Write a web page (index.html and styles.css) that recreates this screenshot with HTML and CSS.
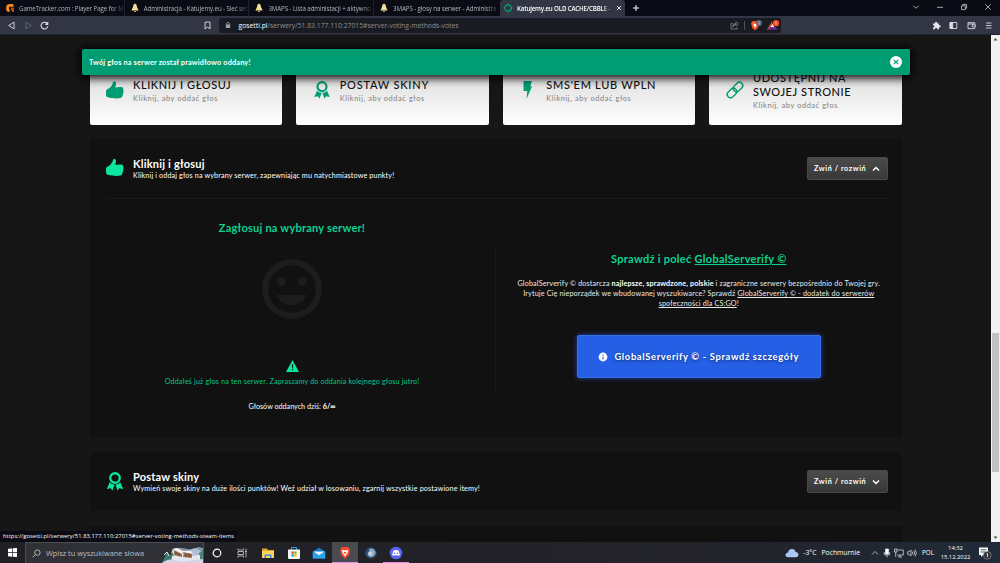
FILE: index.html
```
<!DOCTYPE html>
<html lang="pl">
<head>
    <meta charset="UTF-8">
    <meta name="viewport" content="width=device-width, initial-scale=1.0">
    <title>Katujemy.eu OLD CACHE/CBBLE</title>
    <link rel="stylesheet" href="styles.css">
</head>
<body>
    <!-- icons used more than once -->
    <svg class="sprite">
        <symbol id="thumb" viewBox="0 0 18 18">
            <path d="M0 10.2Q.3 8.2 2.2 7.8Q5 6.5 6.3 3.6L7.2 1Q7.8-.3 9 .4Q10.4 1.4 9.9 3.5L9.3 6.4Q12.5 5.8 15.5 6.1Q17.3 6.4 17.2 8Q17.9 8.9 17.3 10.2Q17.9 11.4 17 12.6Q17.3 14 16.1 14.9Q16.3 16.6 14.4 17.1Q10.4 17.9 6.4 17Q3.4 16.9 1.2 15.9Q0 15.4 0 14Z"/>
        </symbol>
        <symbol id="award" viewBox="0 0 18 20">
            <circle cx="9" cy="6.3" r="5" fill="none" stroke="currentColor" stroke-width="2.4"/>
            <path d="M3.4 10.8Q5 13 8.6 13.4L6.2 19.8L4.6 17L.4 17.8ZM14.6 10.8Q13 13 9.4 13.4L11.8 19.8L13.4 17L17.6 17.8Z"/>
        </symbol>
        <symbol id="bell" viewBox="0 0 10 10">
            <path d="M5 .5Q7 1.2 7.1 4.2L8.6 7.6H1.4L2.9 4.2Q3 1.2 5 .5ZM3.8 8.1H6.2Q5 9.8 3.8 8.1Z"/>
        </symbol>
    </svg>

    <div class="tabs">
        <div class="tab">
            <svg class="fav" viewBox="0 0 10 10"><path d="M5 1Q1 1 1 5T4 9L5.5 6.8L4 6.5V4L9 3.5L8 1Z" fill="#f58a1c"/><path d="M5.5 4.5H9V9H7Z" fill="#b94a10"/></svg>
            <span class="tab-title">GameTracker.com : Player Page for Mk</span>
        </div>
        <div class="tab">
            <svg class="fav bell"><use href="#bell"/></svg>
            <span class="tab-title">Administracja - Katujemy.eu - Sieć ser</span>
        </div>
        <div class="tab">
            <svg class="fav bell"><use href="#bell"/></svg>
            <span class="tab-title">3MAPS - Lista administacji + aktywno</span>
        </div>
        <div class="tab last">
            <svg class="fav bell"><use href="#bell"/></svg>
            <span class="tab-title">3MAPS - głosy na serwer - Administra</span>
        </div>
        <div class="tab active">
            <svg class="fav" viewBox="0 0 10 10"><circle cx="5" cy="5" r="3.2" fill="none" stroke="#0a9b71" stroke-width="1.3"/><path d="M5 .5V2M5 8V9.5M.5 5H2M8 5H9.5" stroke="#0a9b71" stroke-width="1.2"/></svg>
            <span class="tab-title">Katujemy.eu OLD CACHE/CBBLE -</span>
            <svg class="tab-close" viewBox="0 0 6 6"><path d="M1 1L5 5M5 1L1 5"/></svg>
        </div>
        <svg class="new-tab" viewBox="0 0 8 8"><path d="M4 1V7M1 4H7"/></svg>
        <div class="window-buttons">
            <svg viewBox="0 0 8 8"><path d="M1.5 2.8L4 5.3L6.5 2.8"/></svg>
            <svg viewBox="0 0 8 8"><path d="M1 4.3H7"/></svg>
            <svg viewBox="0 0 8 8"><path d="M1.5 2.8H5.3V6.6H1.5ZM2.8 2.6V1.4H6.6V5.3H5.5"/></svg>
            <svg viewBox="0 0 8 8"><path d="M1.3 1.3L6.7 6.7M6.7 1.3L1.3 6.7"/></svg>
        </div>
    </div>

    <div class="toolbar">
        <svg class="nav" viewBox="0 0 8 8"><path d="M6.3 1V7L1.5 4Z"/></svg>
        <svg class="nav off" viewBox="0 0 8 8"><path d="M1.7 1V7L6.5 4Z"/></svg>
        <svg class="nav" viewBox="0 0 8 8"><path d="M6.6 2.6A3 3 0 1 0 6.9 4.8M6.9.8V3H4.7" stroke-width="1"/></svg>
        <svg class="nav bookmark" viewBox="0 0 8 8"><path d="M1.8 1H6.2V7L4 5.3L1.8 7Z"/></svg>
        <div class="address">
            <svg class="lock" viewBox="0 0 6 8"><path d="M.8 3.4H5.2V7H.8Z" fill="#9b9da5"/><path d="M1.7 3.5V2Q3 0 4.3 2V3.5" fill="none" stroke="#9b9da5" stroke-width=".8"/></svg>
            <span class="url"><b>gosetti.pl</b>/serwery/51.83.177.110:27015#server-voting-methods-votes</span>
            <svg class="share" viewBox="0 0 9 9"><path d="M3 2.6H1V8H7V6M2.8 6Q3 3.4 6 3.4V5L8.4 2.8L6 .8V2.3Q3 2.5 2.8 6Z"/></svg>
            <i class="sep"></i>
            <svg class="brave" viewBox="0 0 12 11"><path d="M2.5 1H7.5L9 3L8 7.8L5 10.5L2 7.8L1 3Z" fill="#f4501e"/><path d="M3 3.3L5 4L7 3.3L6.2 5.8L5 8L3.8 5.8Z" fill="#fff"/><circle cx="9" cy="3" r="2.9" fill="#626977"/><path d="M9 1.6V4.4" stroke="#ddd" stroke-width=".7"/></svg>
            <svg class="bat" viewBox="0 0 13 11"><path d="M5.2 1L0 9.5H3.5L5.5 6Z" fill="#f0502a"/><path d="M0 9.5H10.5L8.5 7H3Z" fill="#71309a"/><path d="M5.5 4L7.3 7H3.8Z" fill="#fff"/><circle cx="9" cy="3.2" r="3.1" fill="#fa4b24"/><path d="M9 1.8V4.6" stroke="#fff" stroke-width=".7"/></svg>
        </div>
        <div class="extensions">
            <svg viewBox="0 0 9 9"><path d="M1 2.5H3Q2.8.8 4.1.8T5.2 2.5H7V4.3Q8.7 4.1 8.7 5.3T7 6.5V8.3H5.3Q5.3 6.8 4.1 6.8T2.9 8.3H1V6.5Q2.5 6.4 2.5 5.4T1 4.3Z" fill="#e8e8ec" stroke="none"/></svg>
            <svg viewBox="0 0 9 9"><path d="M1.2 1.5H7.8V7.5H1.2Z"/><path d="M1 1.5H3.7V7.5H1Z" fill="#dcdde2"/></svg>
            <svg viewBox="0 0 9 9"><path d="M7.8 3.2V1.7H1V7.6H7.8V6.3M1 3H7M5.2 3.7H8.4V5.8H5.2Z"/></svg>
            <svg viewBox="0 0 9 9"><path d="M2 2H7.5M2 4.5H7.5M2 7H7.5"/></svg>
        </div>
    </div>

    <div class="viewport">
        <div class="page">
            <div class="methods">
                <div class="method">
                    <svg class="icon"><use href="#thumb"/></svg>
                    <div class="method-text">
                        <h3>KLIKNIJ I GŁOSUJ</h3>
                        <p>Kliknij, aby oddać głos</p>
                    </div>
                </div>
                <div class="method">
                    <svg class="icon"><use href="#award"/></svg>
                    <div class="method-text">
                        <h3 class="skins">POSTAW SKINY</h3>
                        <p>Kliknij, aby oddać głos</p>
                    </div>
                </div>
                <div class="method">
                    <svg class="icon" viewBox="0 0 18 18"><path d="M4.5 0H12.8L11.3 5.6H13L7.5 18L8.3 10H4.5Z"/></svg>
                    <div class="method-text">
                        <h3 class="sms">SMS'EM LUB WPLN</h3>
                        <p>Kliknij, aby oddać głos</p>
                    </div>
                </div>
                <div class="method">
                    <svg class="icon link" viewBox="0 0 18 18"><rect x="-5.3" y="-3.3" width="10.6" height="6.6" rx="3.3" transform="translate(6 12) rotate(-45)"/><rect x="-5.3" y="-3.3" width="10.6" height="6.6" rx="3.3" transform="translate(12 6) rotate(-45)"/></svg>
                    <div class="method-text">
                        <h3>UDOSTĘPNIJ NA<br>SWOJEJ STRONIE</h3>
                        <p>Kliknij, aby oddać głos</p>
                    </div>
                </div>
            </div>

            <section class="panel">
                <header class="panel-head">
                    <svg class="icon thumb-icon"><use href="#thumb"/></svg>
                    <div class="panel-title">
                        <h2>Kliknij i głosuj</h2>
                        <p>Kliknij i oddaj głos na wybrany serwer, zapewniając mu natychmiastowe punkty!</p>
                    </div>
                    <button class="toggle">Zwiń / rozwiń <svg viewBox="0 0 8 6"><path d="M1 4.6L4 1.4L7 4.6"/></svg></button>
                </header>
                <div class="panel-body">
                    <div class="vote">
                        <h4 class="vote-title">Zagłosuj na wybrany serwer!</h4>
                        <svg class="smile" viewBox="0 0 60 60"><circle cx="30" cy="30" r="26.8"/><g><circle cx="19.3" cy="22.5" r="4.5"/><circle cx="40.3" cy="22.5" r="4.5"/><path d="M14.5 36H45Q39.5 46.5 29.8 46.5T14.5 36Z"/></g></svg>
                        <svg class="warning" viewBox="0 0 13 12"><path d="M6.5 0L13 12H0Z"/><path d="M6.5 4.2V7.8M6.5 8.8V10.2" stroke="#111" stroke-width="1.2"/></svg>
                        <p class="voted">Oddałeś już głos na ten serwer. Zapraszamy do oddania kolejnego głosu jutro!</p>
                        <p class="count">Głosów oddanych dziś: <b>6/∞</b></p>
                    </div>
                    <div class="promo">
                        <h4 class="promo-title">Sprawdź i poleć <u>GlobalServerify ©</u></h4>
                        <p class="promo-text">
                            <span>GlobalServerify © dostarcza <b>najlepsze, sprawdzone, polskie</b> i zagraniczne serwery bezpośrednio do Twojej gry.</span>
                            <span>Irytuje Cię nieporządek we wbudowanej wyszukiwarce? Sprawdź <u>GlobalServerify © - dodatek do serwerów</u></span>
                            <span><u>społeczności dla CS:GO</u>!</span>
                        </p>
                        <a class="promo-button">
                            <svg viewBox="0 0 10 10"><circle cx="5" cy="5" r="4.4" fill="#fff"/><path d="M5 2.3V3.5M5 4.4V7.4" stroke="#245fe5" stroke-width="1.1"/></svg>
                            <span>GlobalServerify © - Sprawdź szczegóły</span>
                        </a>
                    </div>
                </div>
            </section>

            <section class="panel">
                <header class="panel-head">
                    <svg class="icon"><use href="#award"/></svg>
                    <div class="panel-title">
                        <h2>Postaw skiny</h2>
                        <p>Wymień swoje skiny na duże ilości punktów! Weź udział w losowaniu, zgarnij wszystkie postawione itemy!</p>
                    </div>
                    <button class="toggle">Zwiń / rozwiń <svg viewBox="0 0 8 6"><path d="M1 1.4L4 4.6L7 1.4"/></svg></button>
                </header>
            </section>

            <section class="panel next"></section>
        </div>

        <div class="alert">
            <span>Twój głos na serwer został prawidłowo oddany!</span>
            <svg viewBox="0 0 12 12"><circle cx="6" cy="6" r="6" fill="#fff"/><path d="M3.8 3.8L8.2 8.2M8.2 3.8L3.8 8.2" stroke="#009c72" stroke-width="1.2"/></svg>
        </div>

        <div class="scrollbar">
            <svg viewBox="0 0 9 9"><path d="M2.5 5.5L4.5 3L6.5 5.5Z"/></svg>
            <div class="thumb"></div>
            <svg viewBox="0 0 9 9"><path d="M2.5 3.5L4.5 6L6.5 3.5Z"/></svg>
        </div>

        <div class="status">https://gosetti.pl/serwery/51.83.177.110:27015#server-voting-methods-steam-items</div>
    </div>

    <div class="taskbar">
        <div class="start">
            <svg viewBox="0 0 9 9"><path d="M0 .8L4 .4V4.2H0ZM4.7 .3L9 0V4.2H4.7ZM0 4.9H4V8.7L0 8.2ZM4.7 4.9H9V9L4.7 8.7Z" fill="#fff"/></svg>
        </div>
        <div class="search">
            <svg class="glass" viewBox="0 0 10 10"><circle cx="6" cy="4" r="3"/><path d="M3.9 6.1L.8 9.2"/></svg>
            <span>Wpisz tu wyszukiwane słowa</span>
            <svg class="scene" viewBox="0 0 41 16">
                <path d="M10 3Q14 0 20 1T30 3L36 0L41 1V16H8Z" fill="#8397a8"/>
                <path d="M24 4L33 1L41 5V10H24Z" fill="#afc0d2"/>
                <path d="M0 16L5 5L8 9L11 2L15 16Z" fill="#3c7870"/>
                <path d="M37 16V6L41 3V16Z" fill="#4e8580"/>
                <path d="M10 9L20 6L29 9L38 8V16H9Z" fill="#e6e6ee"/>
                <path d="M11 3L20 5V10L12 8ZM22 5L30 6V11L21 10Z" fill="#9b6d48"/>
                <path d="M10 2L15 1L21 4L29 4L31 7L21 5L20 7Z" fill="#f6f4f2"/>
                <path d="M14 5V8M17 6V9M24 7V10M27 7V10" stroke="#5e3d2b"/>
                <path d="M0 16Q6 11 13 13T25 14L41 12V16Z" fill="#d7d5e5"/>
                <path d="M2 8L5 5L7 9M10 6L11 3L12 8" fill="none" stroke="#dce9e8"/>
            </svg>
        </div>
        <div class="apps">
            <div><svg viewBox="0 0 14 14"><circle cx="7" cy="7" r="3.8" fill="none" stroke="#fff" stroke-width="1.2"/></svg></div>
            <div><svg viewBox="0 0 14 14"><path d="M2 2.5V4H7.5V2.5M2 11.5V10H7.5V11.5M2 5.5H7.5V8.5H2ZM10 2.5V11.5M9 5.5H11" fill="none" stroke="#bdbdc2" stroke-width=".9"/></svg></div>
            <div><svg viewBox="0 0 14 14"><path d="M1 2.5H6L7 4H13V12H1Z" fill="#e8a825"/><path d="M1 5H13V12H1Z" fill="#fbd45e"/><path d="M3.5 12V8.5H10.5V12H9V10H5V12Z" fill="#3a8fdc"/></svg></div>
            <div><svg viewBox="0 0 14 14"><path d="M4.5 4V1.5H9.5V4" fill="none" stroke="#29a9dd"/><path d="M1 3.5H13V12Q13 13 12 13H2Q1 13 1 12Z" fill="#f4f4f4"/><path d="M4.5 5.5H6.8V7.8H4.5Z" fill="#f05023"/><path d="M7.3 5.5H9.6V7.8H7.3Z" fill="#79b900"/><path d="M4.5 8.3H6.8V10.6H4.5Z" fill="#00a1ed"/><path d="M7.3 8.3H9.6V10.6H7.3Z" fill="#fdb900"/></svg></div>
            <div><svg viewBox="0 0 14 14"><path d="M.8 5.5L7 1.5L13.2 5.5V12.5H.8Z" fill="#1678c8"/><path d="M1.5 5.5H12.5L7 9.5Z" fill="#f1f6fa"/><path d="M.8 5.5L7 9.5L13.2 5.5V12.5H.8Z" fill="#2ba5ea"/></svg></div>
            <div class="current"><svg viewBox="0 0 14 14"><path d="M4 1H10L12 3.5L11 9L7 13L3 9L2 3.5Z" fill="#f4472b"/><path d="M3.8 3.8L7 4.5L10.2 3.8L9.5 7L7 10.5L4.5 7Z" fill="#fff"/><path d="M5.5 6L7 8.5L8.5 6Z" fill="#f4472b"/></svg></div>
            <div><svg viewBox="0 0 14 14"><circle cx="7" cy="7" r="5.8" fill="#274c73"/><path d="M5 3Q9 1.5 11 5T8 11Q4 11.5 3.5 8Q3.5 5.5 6 5Q4.5 4.5 5 3Z" fill="#91a9bd"/><circle cx="6.5" cy="7.5" r="2" fill="#c4d1dc"/></svg></div>
            <div class="running"><svg viewBox="0 0 14 14"><circle cx="7" cy="7" r="6.3" fill="#5865f2"/><path d="M4.5 4.5Q7 3.7 9.5 4.5L11 9Q9.5 10.3 8.7 9.5Q7 9 5.3 9.5Q4.5 10.3 3 9Z" fill="#fff"/><circle cx="5.6" cy="7.3" r=".8" fill="#5865f2"/><circle cx="8.4" cy="7.3" r=".8" fill="#5865f2"/></svg></div>
        </div>
        <div class="tray">
            <svg class="cloud" viewBox="0 0 14 10"><path d="M3.5 9.3Q.5 9.3 .5 6.8Q.7 4.8 3 4.5Q3.5 1 7 1Q10 1 10.6 4Q13.5 4.3 13.5 7Q13.2 9.3 10.5 9.3Z" fill="#a9c7f5"/></svg>
            <span class="temp">-3°C</span>
            <span class="weather">Pochmurnie</span>
            <svg class="sys up" viewBox="0 0 8 8"><path d="M1 5.5L4 2.5L7 5.5"/></svg>
            <svg class="sys mic" viewBox="0 0 8 10"><path d="M2.5 1H5.5V6H2.5Z" fill="#fff"/><path d="M1.3 4V6.8H6.7V4M4 7V9.5"/></svg>
            <svg class="sys net" viewBox="0 0 10 10"><path d="M3 2H9.3V7H3M6 7V9M4 9H8M.5 1H3V4H.5ZM1.7 4V9"/></svg>
            <svg class="sys vol" viewBox="0 0 10 10"><path d="M.7 3.7H2L4 2V8L2 6.3H.7ZM5.3 3.7Q6.3 5 5.3 6.3M6.8 2.7Q8.5 5 6.8 7.3M8.2 1.7Q10.5 5 8.2 8.3"/></svg>
            <span class="lang">POL</span>
            <div class="clock"><span>14:32</span><span>15.12.2022</span></div>
            <svg class="notify" viewBox="0 0 14 14"><path d="M1 1.5H10V9H5L3 11V9H1Z" fill="#fff"/><path d="M2.5 3.8H8.5M2.5 6H7" stroke="#273039" stroke-width=".8"/><circle cx="9.3" cy="9.3" r="3.9" fill="#2d3135" stroke="#888c90" stroke-width=".7"/><path d="M8.5 8.2L9.5 7.5V11" fill="none" stroke="#fff" stroke-width=".8"/></svg>
        </div>
    </div>
</body>
</html>
```
FILE: styles.css
```
* {
    margin: 0;
    padding: 0;
    box-sizing: border-box;
}

body {
    width: 1000px;
    height: 563px;
    overflow: hidden;
    display: grid;
    grid-template-rows: 16px 19px 507px 21px;
    background: #161616;
    color: #fff;
    font-family: Lato, "Open Sans", sans-serif;
    font-size: 7.2px;
    white-space: nowrap;
}

svg {
    display: block;
    flex: none;
}

.sprite {
    display: none;
}

/* browser chrome */
.tabs {
    display: flex;
    background: #0a0b14;
    font-family: "Open Sans", sans-serif;
    font-size: 6.2px;
    letter-spacing: -.1px;
}

.tab {
    width: 124.7px;
    display: flex;
    align-items: center;
    padding-left: 5px;
    border-right: 1px solid #20212c;
    color: #b4b5be;
}

.tab.last {
    width: 125.9px;
    border-right: none;
}

.tab.active {
    width: 125px;
    padding-left: 3px;
    background: #323543;
    border: none;
    border-radius: 3px 3px 0 0;
    color: #fff;
    font-weight: 600;
    letter-spacing: -.18px;
}

.fav {
    width: 10px;
    height: 10px;
    margin-right: 4px;
}

.bell {
    fill: #f3df91;
}

.tab-title {
    width: 105px;
    -webkit-mask-image: linear-gradient(90deg, #000 88%, transparent 102%);
    mask-image: linear-gradient(90deg, #000 88%, transparent 102%);
}

.tab.active .tab-title {
    width: 96px;
}

.tab-close {
    width: 6px;
    height: 6px;
    margin-left: 3px;
    stroke: #d9dae0;
    stroke-width: 1;
}

.new-tab {
    width: 8px;
    height: 8px;
    margin: 4px 0 0 7px;
    stroke: #fff;
}

.window-buttons {
    display: flex;
    gap: 16px;
    margin: 3px 8px 0 auto;
}

.window-buttons svg {
    width: 8px;
    height: 8px;
    fill: none;
    stroke: #c9cad0;
    stroke-width: .8;
}

.toolbar {
    display: flex;
    align-items: center;
    background: #323543;
    padding: 0 7px;
    border-bottom: 1px solid #232532;
}

.nav {
    width: 9px;
    height: 9px;
    margin-right: 7.5px;
    fill: none;
    stroke: #dfe0e5;
    stroke-width: .8;
}

.nav.off {
    stroke: #676a78;
}

.bookmark {
    margin: 0 7px 0 146px;
}

.address {
    width: 562px;
    height: 15px;
    display: flex;
    align-items: center;
    padding-left: 6px;
    border-radius: 2px;
    background: #191b22;
    font-family: "Open Sans", sans-serif;
    font-size: 6.8px;
    color: #8c8e96;
}

.address b {
    color: #fff;
    font-weight: 500;
}

.lock {
    width: 6px;
    height: 8px;
    margin-right: 8px;
}

.url {
    margin-right: auto;
}

.share {
    width: 9px;
    height: 9px;
    fill: none;
    stroke: #8f919a;
    stroke-width: .7;
}

.sep {
    width: 1px;
    height: 9px;
    margin: 0 5px;
    background: #4c4e58;
}

.brave {
    width: 12px;
    height: 11px;
    margin-right: 5px;
}

.bat {
    width: 13px;
    height: 11px;
    margin-right: 1px;
}

.extensions {
    display: flex;
    gap: 8.5px;
    margin-left: auto;
}

.extensions svg {
    width: 9px;
    height: 9px;
    fill: none;
    stroke: #dcdde2;
    stroke-width: .9;
}

/* page */
.viewport {
    position: relative;
    overflow: hidden;
    display: flex;
    background: #161616;
}

.page {
    width: 812.5px;
    margin: 20px auto 0 89.5px;
}

.methods {
    display: grid;
    grid-template-columns: repeat(4, 192.5px);
    justify-content: space-between;
    height: 70px;
    margin-bottom: 14px;
}

.method {
    display: flex;
    align-items: center;
    padding-left: 16.5px;
    border-radius: 2px;
    background: linear-gradient(#dedede 28%, #fff);
    color: #111;
}

.method-text {
    padding-top: 2px;
}

.icon {
    width: 18px;
    height: 18px;
    margin-right: 9px;
    fill: currentColor;
    color: #0ce5a0;
}

.panel .icon {
    height: 19px;
}

.panel .thumb-icon {
    margin-bottom: 2px;
}

.method .icon {
    color: #009c72;
}

.icon.link {
    fill: none;
    stroke: currentColor;
    stroke-width: 1.4;
}

.method h3 {
    font-size: 11px;
    line-height: 14.3px;
    font-weight: 500;
    letter-spacing: .57px;
}

.method .skins {
    letter-spacing: .78px;
}

.method .sms {
    letter-spacing: .7px;
}

.method p {
    margin-top: 1px;
    font-size: 7.4px;
    line-height: 11px;
    letter-spacing: .58px;
    color: #808080;
}

.panel {
    margin-bottom: 15px;
    padding: 0 14.5px 0 16.5px;
    border-radius: 3px;
    background: #111;
}

.panel-head {
    display: flex;
    align-items: center;
    height: 59px;
}

.panel-title {
    margin-right: auto;
    padding-top: 2px;
}

.panel h2 {
    font-size: 11px;
    line-height: 13px;
    font-weight: 700;
    letter-spacing: .2px;
}

.panel-title p {
    line-height: 11.5px;
    letter-spacing: .135px;
}

.toggle {
    width: 81px;
    height: 23px;
    display: flex;
    align-items: center;
    justify-content: space-between;
    padding: 0 7px 0 6.5px;
    border: 1px solid #4a4a4a;
    border-radius: 2px;
    background: linear-gradient(#4b4b4b, #383838);
    color: #fff;
    font-family: inherit;
    font-size: 7.3px;
    font-weight: 700;
    letter-spacing: .56px;
}

.toggle svg {
    width: 8px;
    height: 6px;
    fill: none;
    stroke: #fff;
    stroke-width: 1.4;
}

.panel-body {
    height: 239px;
    display: grid;
    grid-template-columns: 389px 1fr;
    border-top: 1px solid #1b1b1b;
    text-align: center;
}

.vote {
    display: flex;
    flex-direction: column;
    align-items: center;
    padding: 21px 17px 0 0;
}

.panel h4 {
    font-size: 11px;
    line-height: 15px;
    font-weight: 700;
    letter-spacing: .23px;
    color: #0bd393;
}

.panel .promo-title {
    letter-spacing: .28px;
}

.smile {
    width: 60px;
    height: 60px;
    margin: 24px 0 41px;
}

.smile > circle {
    fill: none;
    stroke: #1d1d1d;
    stroke-width: 6;
}

.smile g {
    fill: #1d1d1d;
}

.warning {
    width: 13px;
    height: 12px;
    fill: #0ce5a0;
}

.voted {
    margin-top: 4px;
    line-height: 11px;
    letter-spacing: .135px;
    color: #08c487;
}

.count {
    margin-top: 15px;
    line-height: 10px;
}

.promo {
    height: 148px;
    margin-top: 46px;
    padding: 6px 0 0 14px;
    border-left: 1px solid #1b1b1b;
    display: flex;
    flex-direction: column;
    align-items: center;
}

.promo-text {
    display: flex;
    flex-direction: column;
    align-items: center;
    margin-top: 13px;
    line-height: 10px;
    letter-spacing: .15px;
    color: #e9e9e9;
}

.promo-text b {
    color: #fff;
}

.promo-button {
    flex: none;
    width: 244px;
    height: 43px;
    margin-top: 26px;
    display: flex;
    align-items: center;
    justify-content: center;
    gap: 6px;
    border: 1px solid #3a6fe8;
    border-radius: 2px;
    background: #245fe5;
    box-shadow: 0 0 5px rgba(36, 95, 229, .7);
    font-size: 9.4px;
    font-weight: 700;
    letter-spacing: .65px;
    text-shadow: 0 1px 3px rgba(0, 0, 0, .5);
}

.promo-button svg {
    width: 10px;
    height: 10px;
}

.panel.next {
    height: 40px;
}

.alert {
    position: absolute;
    left: 82px;
    top: 14px;
    width: 828px;
    height: 26px;
    display: flex;
    align-items: center;
    justify-content: space-between;
    padding: 0 8px 0 7px;
    border-radius: 2px;
    background: #009c72;
    box-shadow: 0 1px 10px 2px #000;
    font-size: 7.3px;
    font-weight: 700;
    letter-spacing: .17px;
}

.alert svg {
    width: 12px;
    height: 12px;
}

.scrollbar {
    width: 9px;
    display: flex;
    flex-direction: column;
    background: #f1f1f1;
}

.scrollbar svg {
    width: 9px;
    height: 9px;
    fill: #505050;
}

.scrollbar .thumb {
    height: 139px;
    margin: 289px 1px auto;
    background: #c1c1c1;
}

.status {
    position: absolute;
    left: 0;
    bottom: 0;
    width: 237px;
    height: 11px;
    padding-left: 3px;
    background: #0a0b14;
    font-family: "Open Sans", sans-serif;
    font-size: 5.8px;
    line-height: 11px;
    letter-spacing: .06px;
}

/* windows taskbar */
.taskbar {
    display: flex;
    background: linear-gradient(90deg, #1f2024, #23232a 70%, #202a38);
    font-family: "Open Sans", sans-serif;
    color: #fff;
}

.start {
    width: 25px;
    padding: 6px 0 0 8px;
}

.start svg {
    width: 9px;
    height: 9px;
}

.search {
    width: 179px;
    display: flex;
    align-items: center;
    padding-left: 6px;
    border: 1px solid #4d4e52;
    border-bottom: none;
    background: #303136;
    color: #bdbdc1;
    font-size: 7.4px;
}

.glass {
    width: 9px;
    height: 9px;
    margin-right: 5px;
    fill: none;
    stroke: #d0d0d4;
    stroke-width: .9;
}

.scene {
    width: 41px;
    height: 16px;
    margin: auto 0 0 auto;
}

.apps {
    display: flex;
}

.apps > div {
    width: 25.6px;
    padding: 4px 0 0 6px;
}

.apps svg {
    width: 14px;
    height: 14px;
}

.apps .current {
    background: #4a4b50;
    border-bottom: 1px solid #e58be2;
}

.apps .running {
    border-bottom: 1px solid #e58be2;
}

.tray {
    flex: 1;
    display: flex;
    align-items: center;
    justify-content: flex-end;
    padding-right: 8px;
    font-size: 6.8px;
}

.cloud {
    width: 14px;
    height: 10px;
}

.temp {
    margin: 0 5px 0 4px;
}

.weather {
    margin-right: 11px;
}

.sys {
    width: 10px;
    height: 10px;
    margin-right: 3px;
    fill: none;
    stroke: #e9e9ec;
    stroke-width: .7;
}

.sys.up,
.sys.mic {
    width: 8px;
}

.sys.up {
    margin-right: 4px;
}

.lang {
    margin: 0 7px 0 2px;
    font-size: 6.3px;
}

.clock {
    width: 29px;
    margin-right: 8px;
    display: flex;
    flex-direction: column;
    align-items: center;
    font-size: 5.8px;
    line-height: 9px;
}

.notify {
    width: 14px;
    height: 14px;
}
```
